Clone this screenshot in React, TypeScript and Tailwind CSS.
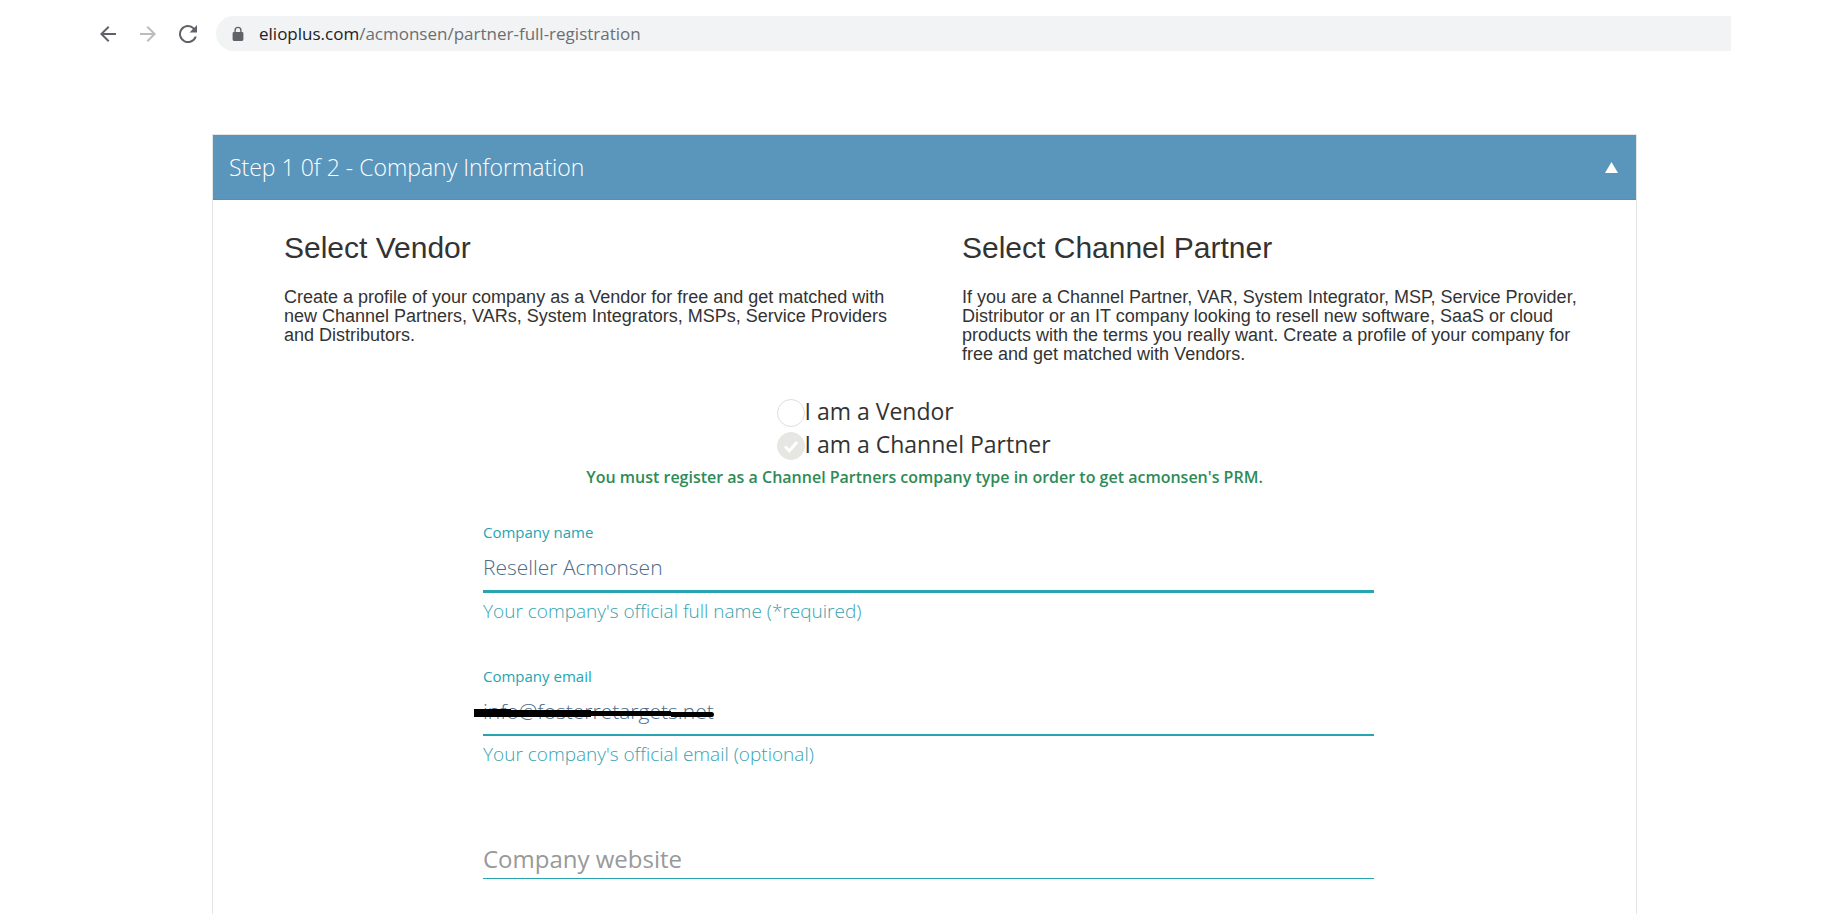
import React from "react";

type FieldProps = {
  id: string;
  label?: string;
  type: string;
  value?: string;
  placeholder?: string;
  hint?: string;
  line: string;
  children?: React.ReactNode;
};

function Field({ id, label, type, value, placeholder, hint, line, children }: FieldProps) {
  return (
    <div className="min-h-36">
      <div className="h-6 text-[15px] leading-6 text-[#27a4b0]">
        {label && <label htmlFor={id}>{label}</label>}
      </div>
      <div className={`relative border-[#27a4b0] ${line}`}>
        <input
          id={id}
          type={type}
          defaultValue={value}
          placeholder={placeholder}
          aria-label={label ? undefined : placeholder}
          className="block h-[46px] w-full bg-transparent text-[21px] font-light text-[#4d6b8a] outline-none placeholder-shown:pt-1.5 placeholder-shown:text-[24px] placeholder:font-normal placeholder:text-[#999999] placeholder:opacity-100"
        />
        {children}
      </div>
      {hint && <p className="mt-1 text-[19px] font-light leading-7 text-[#36a3b0]">{hint}</p>}
    </div>
  );
}

function CompanyType({ id, label, checked }: { id: string; label: string; checked?: boolean }) {
  return (
    <div className="flex h-[33px] items-center">
      <span className="relative mt-1 size-7 shrink-0">
        <input
          id={id}
          type="radio"
          name="company-type"
          defaultChecked={checked}
          className="block size-7 appearance-none rounded-full border border-[#deded9] bg-white checked:border-[#e6e6e2] checked:bg-[#e6e6e2]"
        />
        {checked && (
          <svg viewBox="0 0 28 28" className="pointer-events-none absolute inset-0 size-7" fill="none" stroke="#ffffff" strokeWidth="3">
            <path d="M8 14.5l4.400 4.400L20 10" />
          </svg>
        )}
      </span>
      <label htmlFor={id} className="text-[23px] leading-8 text-[#333333]">
        {label}
      </label>
    </div>
  );
}

export default function App() {
  return (
    <div className="flex min-h-screen flex-col bg-white font-['Open_Sans',sans-serif]">
      <nav className="flex items-center pt-4 pr-[108px] pl-24">
        <button type="button" aria-label="Back" className="mr-4 size-6">
          <svg viewBox="0 0 24 24" className="size-6" fill="#5f6368">
            <path d="M20 11H7.83l5.59-5.59L12 4l-8 8 8 8 1.41-1.41L7.83 13H20z" />
          </svg>
        </button>
        <button type="button" aria-label="Forward" className="mr-4 size-6">
          <svg viewBox="0 0 24 24" className="size-6" fill="#babcbe">
            <path d="M12 4l-1.41 1.41L16.17 11H4v2h12.17l-5.58 5.59L12 20l8-8z" />
          </svg>
        </button>
        <button type="button" aria-label="Reload" className="mr-4 size-6">
          <svg viewBox="0 0 24 24" className="size-6" fill="#5f6368">
            <path d="M18.36 5.64A9 9 0 1 0 20.7 14.4h-2.14A7 7 0 1 1 16.9 7.1L13.6 10.4H21V3z" />
          </svg>
        </button>
        <div className="flex h-[35px] flex-1 items-center rounded-l-full bg-[#f1f3f4] pl-4">
          <svg viewBox="0 0 12 16" className="mr-[15px] h-4 w-3" fill="#5f6368">
            <path fillRule="evenodd" d="M2.4 6V4.3a3.6 3.6 0 0 1 7.2 0V6h.4a1.4 1.4 0 0 1 1.4 1.4v6.2A1.4 1.4 0 0 1 10 15H2A1.4 1.4 0 0 1 .6 13.6V7.4A1.4 1.4 0 0 1 2 6zM3.8 6h4.400V4.3a2.2 2.2 0 0 0-4.400 0z" />
          </svg>
          <span className="text-[17px] text-[#6b6f73]">
            <span className="text-[#202124]">elioplus.com</span>/acmonsen/partner-full-registration
          </span>
        </div>
      </nav>

      <main className="mt-[83px] mr-[202px] ml-[212px] flex-1 border border-b-0 border-[#e5e5e5]">
        <header className="flex h-[65px] items-center justify-between border-b border-[#3598dc] bg-[#5a95bc] pr-[18px] pl-4 text-white">
          <h1 className="text-[23px] font-light">Step 1 0f 2 - Company Information</h1>
          <button type="button" aria-label="Collapse" className="flex">
            <svg viewBox="0 0 13 11" className="h-[11px] w-[13px]" fill="#ffffff">
              <path d="M6.5 0L13 11H0z" />
            </svg>
          </button>
        </header>

        <section className="grid grid-cols-2 gap-x-[60px] pt-[30px] pr-14 pl-[71px] font-['Liberation_Sans',Arial,sans-serif] text-[#333333]">
          <div>
            <h2 className="text-[30px] leading-9">Select Vendor</h2>
            <p className="mt-[22px] text-[18px] leading-[19px]">
              Create a profile of your company as a Vendor for free and get matched with new Channel Partners, VARs,
              System Integrators, MSPs, Service Providers and Distributors.
            </p>
          </div>
          <div>
            <h2 className="text-[30px] leading-9">Select Channel Partner</h2>
            <p className="mt-[22px] text-[18px] leading-[19px]">
              If you are a Channel Partner, VAR, System Integrator, MSP, Service Provider, Distributor or an IT company
              looking to resell new software, SaaS or cloud products with the terms you really want. Create a profile of
              your company for free and get matched with Vendors.
            </p>
          </div>
        </section>

        <form>
          <div className="mx-auto mt-[30px] w-74">
            <CompanyType id="vendor" label="I am a Vendor" />
            <CompanyType id="partner" label="I am a Channel Partner" checked />
          </div>
          <p className="mt-[3px] text-center text-[16px] leading-7 font-semibold text-[#2e8b57]">
            You must register as a Channel Partners company type in order to get acmonsen's PRM.
          </p>

          <div className="mt-[29px] pr-[262px] pl-[270px]">
            <Field
              id="company-name"
              label="Company name"
              type="text"
              value="Reseller Acmonsen"
              hint="Your company's official full name (*required)"
              line="border-b-3"
            />
            <Field
              id="company-email"
              label="Company email"
              type="email"
              value="info@fosterretargets.net"
              hint="Your company's official email (optional)"
              line="border-b-2"
            >
              <svg viewBox="0 0 240 9" className="absolute top-[21px] -left-[9px] h-[9px] w-[240px]" fill="#000000">
                <path d="M0 0H37V1H117V2H197V3H238Q240 3 240 5.5T238 8H197V7H117V8H0z" />
              </svg>
            </Field>
            <Field id="company-website" type="url" placeholder="Company website" line="border-b" />
          </div>
        </form>
      </main>
    </div>
  );
}
